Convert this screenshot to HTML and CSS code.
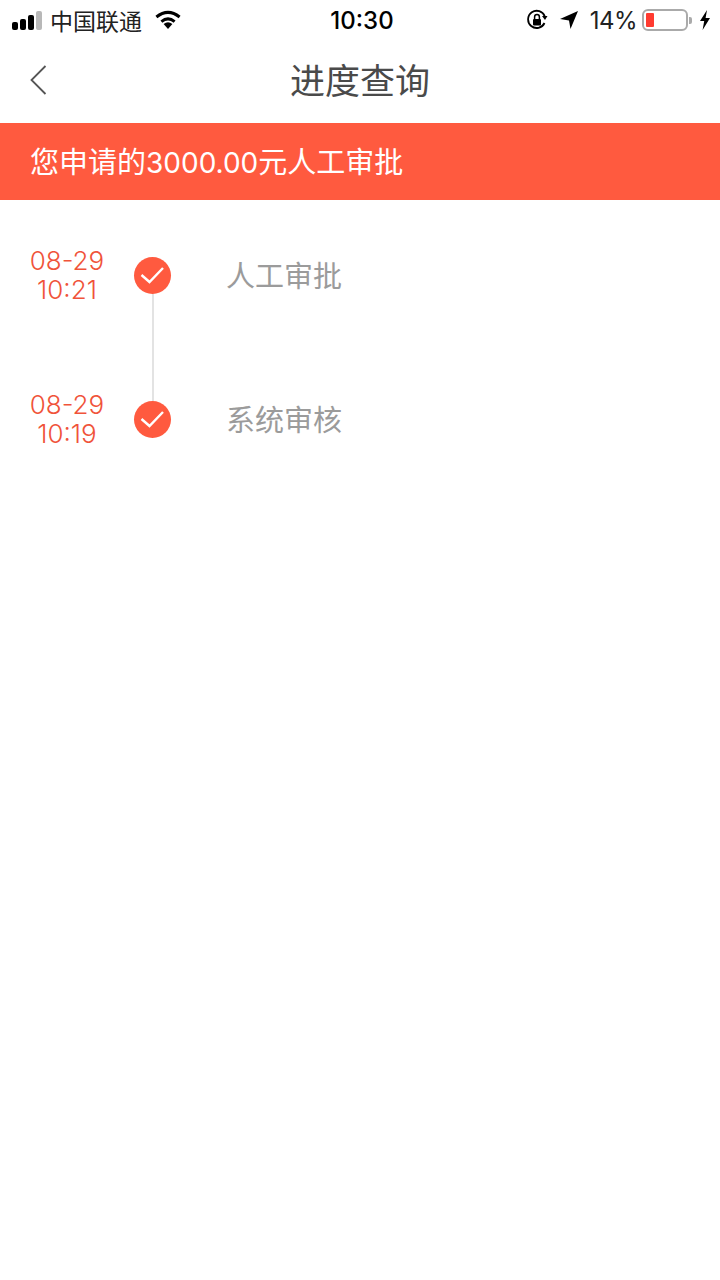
FILE: index.html
```html
<!DOCTYPE html>
<html lang="zh-CN">
<head>
  <meta charset="UTF-8">
  <title>进度查询</title>
  <meta name="viewport" content="width=device-width, initial-scale=1.0">
  <link rel="stylesheet" href="styles.css">
</head>
<body>
  <div class="statusbar">
    <div class="status-left">
      <div class="signal">
        <span class="bar bar1"></span>
        <span class="bar bar2"></span>
        <span class="bar bar3"></span>
        <span class="bar bar4"></span>
      </div>
      <span class="carrier">中国联通</span>
      <svg class="wifi" width="28" height="20" viewBox="0 0 28 20">
        <path d="M14 19 L9.6 14 Q14 10.6 18.4 14 Z" fill="#000"/>
        <path d="M7.4 11.6 Q14 6.2 20.6 11.6" fill="none" stroke="#000" stroke-width="3"/>
        <path d="M2.4 7 Q14 -2.2 25.6 7" fill="none" stroke="#000" stroke-width="3"/>
      </svg>
    </div>
    <div class="status-time">10:30</div>
    <div class="status-right">
      <svg class="lock" width="22" height="22" viewBox="0 0 22 22">
        <path d="M18.5 14 A8.6 8.6 0 1 1 18.8 7.5" fill="none" stroke="#000" stroke-width="1.8"/>
        <path d="M16 7 L21.5 7 L19 11 Z" fill="#000"/>
        <rect x="7" y="10" width="8" height="6.5" rx="1" fill="#000"/>
        <path d="M8.6 10 V8 A2.4 2.4 0 0 1 13.4 8 V10" fill="none" stroke="#000" stroke-width="1.5"/>
      </svg>
      <svg class="arrow" width="20" height="20" viewBox="0 0 20 20">
        <path d="M19 1 L1 9 L10 10.5 L11.5 19 Z" fill="#000"/>
      </svg>
      <span class="percent">14%</span>
      <div class="battery">
        <div class="battery-body"><div class="battery-level"></div></div>
        <div class="battery-tip"></div>
      </div>
      <svg class="bolt" width="12" height="20" viewBox="0 0 12 20">
        <path d="M8 0 L1 11 L5.2 11 L3.6 20 L11 8 L6.6 8 Z" fill="#000"/>
      </svg>
    </div>
  </div>

  <div class="navbar">
    <svg class="back" width="20" height="32" viewBox="0 0 20 32">
      <path d="M16.5 2 L2.5 16 L16.5 30" fill="none" stroke="#555" stroke-width="1.8"/>
    </svg>
    <h1>进度查询</h1>
  </div>

  <div class="banner">您申请的<span class="amount">3000.00</span>元人工审批</div>

  <div class="timeline">
    <div class="step step-line">
      <div class="time">08-29<br>10:21</div>
      <div class="dot">
        <svg width="37" height="37" viewBox="0 0 37 37">
          <path d="M7.5 18 L15.5 25 L29 11" fill="none" stroke="#fff" stroke-width="2.4"/>
        </svg>
      </div>
      <div class="label">人工审批</div>
    </div>
    <div class="step">
      <div class="time">08-29<br>10:19</div>
      <div class="dot">
        <svg width="37" height="37" viewBox="0 0 37 37">
          <path d="M7.5 18 L15.5 25 L29 11" fill="none" stroke="#fff" stroke-width="2.4"/>
        </svg>
      </div>
      <div class="label">系统审核</div>
    </div>
  </div>
</body>
</html>
```

FILE: styles.css
```css
body {
  font-family: "Inter", "Noto Sans CJK SC", sans-serif;
  margin: 0;
  background: #ffffff;
}
.statusbar {
  height: 40px;
  display: grid;
  grid-template-columns: 1fr auto 1fr;
  align-items: center;
  color: #000;
}
.status-left {
  display: flex;
  align-items: center;
  padding-left: 12px;
}
.signal {
  display: flex;
  align-items: flex-end;
  gap: 2px;
  height: 19px;
}
.bar {
  width: 6px;
  border-radius: 2px;
  background: #000;
}
.bar1 { height: 8px; }
.bar2 { height: 11px; }
.bar3 { height: 15px; }
.bar4 { height: 19px; background: #b8b8b8; }
.carrier {
  font-size: 23px;
  margin-left: 8px;
  color: #222;
}
.wifi {
  margin-left: 12px;
}
.status-time {
  font-size: 24px;
  font-weight: 500;
  padding-left: 4px;
}
.status-right {
  display: flex;
  align-items: center;
  justify-content: flex-end;
  padding-right: 9px;
}
.arrow {
  margin-left: 11px;
}
.percent {
  font-size: 24px;
  letter-spacing: -0.5px;
  margin-left: 11px;
  color: #222;
}
.battery {
  display: flex;
  align-items: center;
  margin-left: 5px;
}
.battery-body {
  width: 46px;
  height: 22px;
  box-sizing: border-box;
  border: 2px solid #aaa;
  border-radius: 6px;
  padding: 2px;
}
.battery-level {
  width: 8px;
  height: 100%;
  background: #ff3b30;
  border-radius: 1px;
}
.battery-tip {
  width: 3px;
  height: 7px;
  margin-left: 1px;
  background: #aaa;
  border-radius: 0 2px 2px 0;
}
.bolt {
  margin-left: 7px;
}
.navbar {
  height: 77px;
  padding-bottom: 6px;
  display: flex;
  align-items: center;
  justify-content: center;
  position: relative;
}
.navbar h1 {
  margin: 0;
  font-size: 35px;
  font-weight: 400;
  color: #4a4a4a;
}
.back {
  position: absolute;
  left: 29px;
  top: 24px;
}
.banner {
  height: 77px;
  line-height: 79px;
  padding-left: 30px;
  background: #ff5a3f;
  color: #fff;
  font-size: 29px;
}
.amount {
  font-size: 28px;
}
.timeline {
  padding-top: 47px;
}
.step {
  display: flex;
  align-items: flex-start;
  height: 144px;
  position: relative;
}
.step-line::after {
  content: "";
  position: absolute;
  left: 152px;
  top: 44px;
  width: 2px;
  height: 112px;
  background: #e3e3e3;
}
.time {
  width: 134px;
  margin-top: -1px;
  text-align: center;
  font-size: 26px;
  font-weight: 300;
  line-height: 29px;
  color: #f0533a;
}
.dot {
  width: 37px;
  height: 37px;
  margin-top: 10px;
  border-radius: 50%;
  background: #ff5a3f;
  position: relative;
  z-index: 1;
}
.dot svg {
  display: block;
}
.label {
  margin-left: 55px;
  margin-top: 11px;
  font-size: 29px;
  line-height: 38px;
  color: #9b9b9b;
}
```
